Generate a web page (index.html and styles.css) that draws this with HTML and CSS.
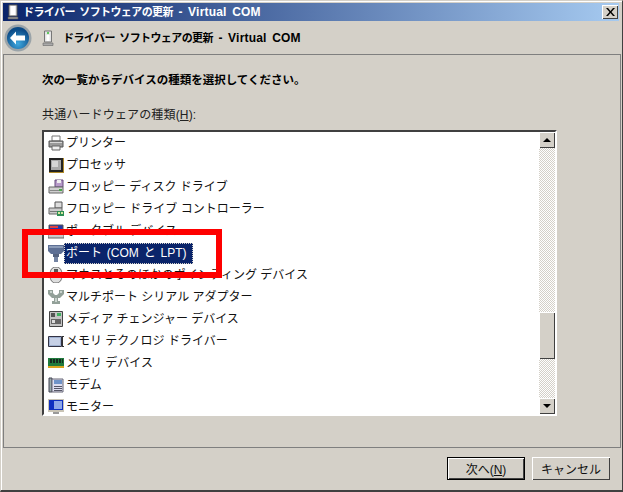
FILE: index.html
```html
<!DOCTYPE html>
<html lang="ja">
<head>
    <meta charset="UTF-8">
    <meta name="viewport" content="width=device-width, initial-scale=1.0">
    <title>ドライバー ソフトウェアの更新 - Virtual COM</title>
    <link rel="stylesheet" href="styles.css">
</head>
<body>
    <div class="window">
        <div class="titlebar">
            <svg class="title-icon" width="12" height="16" viewBox="0 0 12 16">
                <path d="M2 1h8v11H2z" fill="#e8e8e8" stroke="#555"/>
                <path d="M4 2h4v9H4z" fill="#fff"/>
                <path d="M1 13h10v2H1z" fill="#999" stroke="#555" stroke-width=".6"/>
            </svg>
            <span class="title-text"><span class="jp">ドライバー ソフトウェアの更新</span> - Virtual COM</span>
            <div class="close-btn">
                <svg width="9" height="8" viewBox="0 0 9 8"><path d="M0 0h2l2.500 3L7 0h2L5.500 4 9 8H7L4.500 5 2 8H0l3.500-4z" fill="#000"/></svg>
            </div>
        </div>

        <div class="navbar">
            <svg class="back-btn" width="28" height="28" viewBox="0 0 28 28">
                <defs>
                    <radialGradient id="backFill" cx="50%" cy="75%" r="65%">
                        <stop offset="0" stop-color="#3fa9e0"/>
                        <stop offset="1" stop-color="#0b4a86"/>
                    </radialGradient>
                </defs>
                <circle cx="14" cy="14" r="13.500" fill="#9aa3a8"/>
                <circle cx="14" cy="14" r="11" fill="url(#backFill)"/>
                <path d="M6 14l6-6.500v4h9v5h-9v4z" fill="#fff"/>
            </svg>
            <svg class="nav-icon" width="12" height="16" viewBox="0 0 12 16">
                <path d="M2.500 1h7v11h-7z" fill="#e4e4e4" stroke="#777"/>
                <path d="M5 2h2v2H5z" fill="#5fc85f"/>
                <path d="M4.500 5h3v6h-3z" fill="#fff"/>
                <path d="M1 13h10v2.500H1z" fill="#aaa" stroke="#666" stroke-width=".6"/>
            </svg>
            <span class="nav-title"><span class="jp">ドライバー ソフトウェアの更新</span> - Virtual COM</span>
        </div>

        <div class="panel">
            <p class="lead">次の一覧からデバイスの種類を選択してください。</p>
            <p class="list-label">共通ハードウェアの種類(<u>H</u>):</p>

            <div class="listbox">
                <div class="rows">
                    <div class="row">
                        <svg width="16" height="16" viewBox="0 0 16 16"><path d="M4 1h8v5H4z" fill="#fff" stroke="#777"/><path d="M1 6h14v6H1z" fill="#9a9a9a" stroke="#555"/><path d="M2 7h12v1H2z" fill="#d8d8d8"/><path d="M4 11h8v4H4z" fill="#eee" stroke="#666"/></svg>
                        <span class="row-text">プリンター</span>
                    </div>
                    <div class="row">
                        <svg width="16" height="16" viewBox="0 0 16 16"><path d="M1 1h14v14H1z" fill="#222"/><path d="M3 3h10v10H3z" fill="#a9a9a9"/><path d="M4 4h6v6H4z" fill="#d5d5d5"/><path d="M1 15h14v1H1zM15 1h1v15h-1z" fill="#b08a2a"/></svg>
                        <span class="row-text">プロセッサ</span>
                    </div>
                    <div class="row">
                        <svg width="16" height="16" viewBox="0 0 16 16"><path d="M7 1h8v7H7z" fill="#b79ac9" stroke="#654a7d"/><path d="M9 1h4v3H9z" fill="#eee"/><path d="M1 8h14v6H1z" fill="#d0d0d0" stroke="#666"/><path d="M2 11h12v1H2z" fill="#888"/><path d="M11 10h3v2h-3z" fill="#4aa84a"/></svg>
                        <span class="row-text">フロッピー ディスク ドライブ</span>
                    </div>
                    <div class="row">
                        <svg width="16" height="16" viewBox="0 0 16 16"><path d="M7 1h7v6H7z" fill="#ddd" stroke="#555"/><path d="M1 7h13v6H1z" fill="#ccc" stroke="#666"/><path d="M2 10h11v1H2z" fill="#777"/><path d="M9 10h7v5H9z" fill="#2f8f55"/><path d="M10 11h2v2h-2zM13 11h2v2h-2z" fill="#d8e8a0"/></svg>
                        <span class="row-text">フロッピー ドライブ コントローラー</span>
                    </div>
                    <div class="row">
                        <svg width="16" height="16" viewBox="0 0 16 16"><path d="M1 2h14v9H1z" fill="#2438a8" stroke="#555"/><path d="M2 3h8v2H2z" fill="#e04040"/><path d="M0 11h16v4H0z" fill="#c8c8c8" stroke="#666"/></svg>
                        <span class="row-text">ポータブル デバイス</span>
                    </div>
                    <div class="row selected">
                        <svg width="16" height="18" viewBox="0 0 16 18"><path d="M0 1h16v6l-3 3H3L0 7z" fill="#5d6f94"/><path d="M1 2h14v2H1z" fill="#8b9bb8"/><path d="M5 10h6v3H5z" fill="#54627f"/><path d="M6 13h4v5H6z" fill="#7484a3"/></svg>
                        <span class="row-text">ポート (COM と LPT)</span>
                    </div>
                    <div class="row">
                        <svg width="16" height="16" viewBox="0 0 16 16"><path d="M8 0c-4 0-6 3-6 8s2 8 6 8 6-3 6-8-2-8-6-8z" fill="#ddd" stroke="#666"/><path d="M6 2h4v5H6z" fill="#555"/></svg>
                        <span class="row-text">マウスとそのほかのポインティング デバイス</span>
                    </div>
                    <div class="row">
                        <svg width="16" height="16" viewBox="0 0 16 16"><path d="M0 1h5v3l2 2h2l2-2V1h5v4l-4 4H10v3h2v3H4v-3h2V9H4L0 5z" fill="#93a199"/><path d="M2 2h2v2H2zM12 2h2v2h-2zM7 9h2v4H7z" fill="#c9d3cd"/></svg>
                        <span class="row-text">マルチポート シリアル アダプター</span>
                    </div>
                    <div class="row">
                        <svg width="16" height="16" viewBox="0 0 16 16"><path d="M1.500.500h13v15h-13z" fill="#c4c4c4" stroke="#444"/><path d="M3 2h4v4H3z" fill="#555"/><path d="M9 2h4v3H9z" fill="#40b060"/><path d="M3 8h10v5H3z" fill="#666"/><path d="M4 9h3v3H4z" fill="#ddd"/></svg>
                        <span class="row-text">メディア チェンジャー デバイス</span>
                    </div>
                    <div class="row">
                        <svg width="16" height="16" viewBox="0 0 16 16"><path d="M.500 3.500h13v10H.500z" fill="#9fb0d0" stroke="#334"/><path d="M2 5h10v7H2z" fill="#c6d0e6"/><path d="M14 3h2v1h-1v9h1v1h-2z" fill="#333"/></svg>
                        <span class="row-text">メモリ テクノロジ ドライバー</span>
                    </div>
                    <div class="row">
                        <svg width="16" height="16" viewBox="0 0 16 16"><path d="M0 3h16v8H0z" fill="#1f7a3c"/><path d="M2 4h2v4H2zM5 4h2v4H5zM8 4h2v4H8zM11 4h2v4h-2zM14 4h1v4h-1z" fill="#152a20"/><path d="M0 11h16v2H0z" fill="#d8a520"/></svg>
                        <span class="row-text">メモリ デバイス</span>
                    </div>
                    <div class="row">
                        <svg width="16" height="16" viewBox="0 0 16 16"><path d="M1 1h3v14H1z" fill="#9aa" stroke="#445"/><path d="M4 2h11v13H4z" fill="#dde" stroke="#667"/><path d="M6 3h8v4H6z" fill="#6f93c8"/><path d="M6 9h8v1H6zM6 11h8v1H6zM6 13h8v1H6z" fill="#556"/></svg>
                        <span class="row-text">モデム</span>
                    </div>
                    <div class="row">
                        <svg width="16" height="16" viewBox="0 0 16 16"><path d="M0 0h16v13H0z" fill="#c9c4b6"/><path d="M1 1h14v10H1z" fill="#1030c0"/><path d="M6 2h8v8H6z" fill="#8fa8e8"/><path d="M5 13h6v2H5z" fill="#999"/></svg>
                        <span class="row-text">モニター</span>
                    </div>
                </div>

                <div class="scrollbar">
                    <div class="sb-btn"><span class="arrow-up"></span></div>
                    <div class="sb-track sb-track-top"></div>
                    <div class="sb-thumb"></div>
                    <div class="sb-track"></div>
                    <div class="sb-btn"><span class="arrow-down"></span></div>
                </div>
            </div>
        </div>

        <div class="footer">
            <button type="button" class="btn btn-default">次へ(<u>N</u>)</button>
            <button type="button" class="btn">キャンセル</button>
        </div>

        <div class="callout"></div>
    </div>
</body>
</html>
```

FILE: styles.css
```css
body {
    margin: 0;
    background-color: #d4d0c8;
    font-family: "Liberation Sans", "Noto Sans CJK JP", sans-serif;
    font-size: 12px;
    color: #000;
}

.window {
    position: relative;
    box-sizing: border-box;
    width: 623px;
    height: 492px;
    display: flex;
    flex-direction: column;
    padding: 3px 1px 0 2px;
    background-color: #d4d0c8;
    border-top: 1px solid #d4d0c8;
    border-left: 1px solid #d4d0c8;
    border-bottom: 2px solid #404040;
    border-right: 1px solid #404040;
    box-shadow: inset 1px 1px 0 #fff;
}

.titlebar {
    height: 18px;
    margin: -1px 2px 0 0;
    display: flex;
    align-items: center;
    padding: 0 1px 0 4px;
    background: linear-gradient(to right, #0a246a, #a6caf0);
    color: #fff;
    font-weight: bold;
}

.title-icon {
    margin-right: 4px;
}

.title-text {
    flex: 1;
    padding-bottom: 2px;
    letter-spacing: .2px;
    word-spacing: 2px;
}

.jp {
    font-size: 11px;
    letter-spacing: -.6px;
}

.close-btn {
    box-sizing: border-box;
    width: 16px;
    height: 14px;
    display: flex;
    align-items: center;
    justify-content: center;
    background-color: #d4d0c8;
    box-shadow: inset 1px 1px 0 #fff, inset -1px -1px 0 #404040;
}

.navbar {
    height: 33px;
    display: flex;
    align-items: center;
}

.back-btn {
    margin-left: 1px;
}

.nav-icon {
    margin-left: 10px;
    margin-right: 9px;
}

.nav-title {
    padding-bottom: 2px;
    font-weight: bold;
    letter-spacing: .2px;
    word-spacing: 2px;
}

.panel {
    box-sizing: border-box;
    height: 394px;
    padding: 0 62px 0 38px;
    border: 1px solid #7f7f7f;
    display: flex;
    flex-direction: column;
}

.lead {
    margin: 16px 0 0 0;
    height: 18px;
    line-height: 18px;
    font-size: 11.500px;
    font-weight: bold;
}

.list-label {
    margin: 17px 0 0 0;
    height: 18px;
    line-height: 18px;
    color: #222;
    letter-spacing: .15px;
}

.listbox {
    box-sizing: border-box;
    margin-top: 6px;
    width: 515px;
    height: 286px;
    display: flex;
    background-color: #fff;
    border-top: 2px solid #404040;
    border-left: 2px solid #404040;
    border-bottom: 2px solid #fff;
    border-right: 2px solid #fff;
}

.rows {
    flex: 1;
    overflow: hidden;
    padding: 0 0 0 4px;
}

.row {
    height: 22px;
    display: flex;
    align-items: center;
    white-space: nowrap;
}

.row-text {
    padding: 0 2px 0 2px;
    line-height: 21px;
    color: #111;
}

.selected .row-text {
    padding: 0 6px 0 2px;
    background-color: #0a246a;
    color: #fff;
    outline: 1px dotted #d4d0c8;
    outline-offset: -1px;
    word-spacing: 1.500px;
}

.scrollbar {
    width: 16px;
    display: flex;
    flex-direction: column;
}

.sb-btn {
    box-sizing: border-box;
    height: 16px;
    display: flex;
    align-items: center;
    justify-content: center;
    background-color: #d4d0c8;
    box-shadow: inset 1px 1px 0 #fff, inset -1px -1px 0 #404040;
}

.arrow-up {
    border-left: 4px solid transparent;
    border-right: 4px solid transparent;
    border-bottom: 4px solid #000;
}

.arrow-down {
    border-left: 4px solid transparent;
    border-right: 4px solid transparent;
    border-top: 4px solid #000;
}

.sb-track {
    flex: 1;
    background-color: #fff;
    background-image: conic-gradient(#d4d0c8 25%, #fff 0 50%, #d4d0c8 0 75%, #fff 0);
    background-size: 2px 2px;
}

.sb-track-top {
    flex: none;
    height: 164px;
}

.sb-thumb {
    height: 47px;
    background-color: #d4d0c8;
    box-shadow: inset 1px 1px 0 #fff, inset -1px -1px 0 #404040;
}

.footer {
    flex: 1;
    display: flex;
    justify-content: flex-end;
    gap: 7px;
    padding: 9px 11px 0 0;
}

.btn {
    box-sizing: border-box;
    width: 78px;
    height: 23px;
    padding: 0;
    border: none;
    background-color: #d4d0c8;
    font-family: inherit;
    font-size: 12px;
    color: #111;
    box-shadow: inset 1px 1px 0 #fff, inset -1px -1px 0 #404040;
}

.btn-default {
    border: 1px solid #000;
}

.callout {
    position: absolute;
    left: 21px;
    top: 228px;
    width: 188px;
    height: 37px;
    border: 6px solid #fe0000;
}
```
